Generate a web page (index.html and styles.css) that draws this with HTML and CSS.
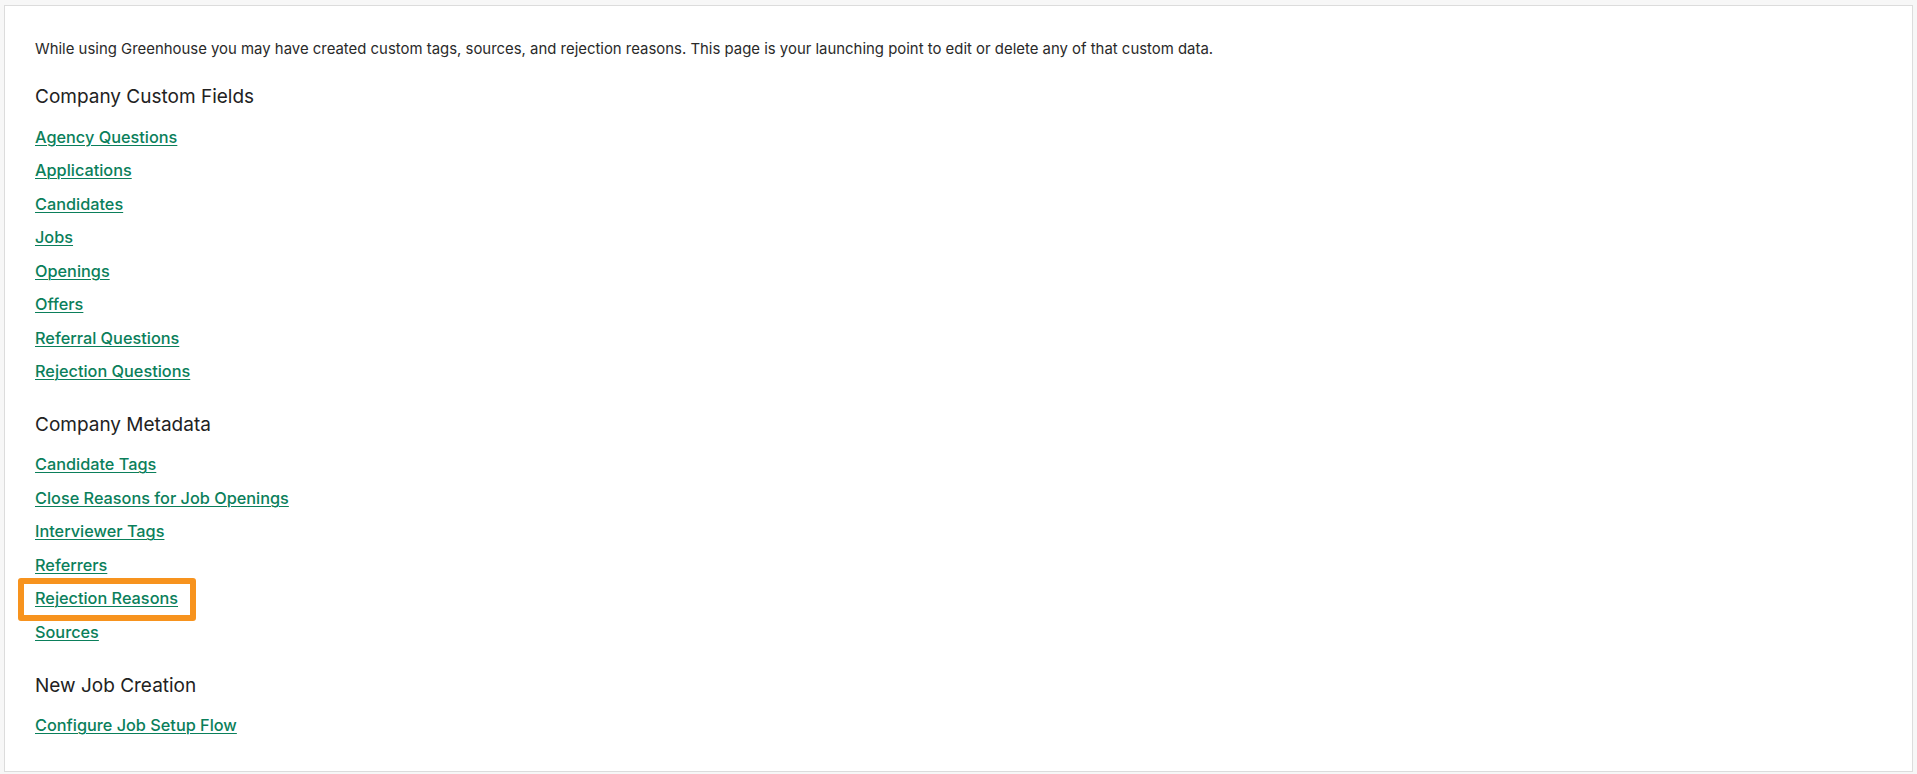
FILE: index.html
```html
<!DOCTYPE html>
<html lang="en">
<head>
<meta charset="utf-8">
<title>Custom Options</title>
<link rel="stylesheet" href="styles.css">
</head>
<body>
<div class="card">
  <p class="intro">While using Greenhouse you may have created custom tags, sources, and rejection reasons. This page is your launching point to edit or delete any of that custom data.</p>

  <section class="section">
    <h2 class="section-title">Company Custom Fields</h2>
    <ul class="link-list">
      <li><a href="#" class="link">Agency Questions</a></li>
      <li><a href="#" class="link">Applications</a></li>
      <li><a href="#" class="link">Candidates</a></li>
      <li><a href="#" class="link">Jobs</a></li>
      <li><a href="#" class="link">Openings</a></li>
      <li><a href="#" class="link">Offers</a></li>
      <li><a href="#" class="link">Referral Questions</a></li>
      <li><a href="#" class="link">Rejection Questions</a></li>
    </ul>
  </section>

  <section class="section">
    <h2 class="section-title">Company Metadata</h2>
    <ul class="link-list">
      <li><a href="#" class="link">Candidate Tags</a></li>
      <li><a href="#" class="link">Close Reasons for Job Openings</a></li>
      <li><a href="#" class="link">Interviewer Tags</a></li>
      <li><a href="#" class="link">Referrers</a></li>
      <li><a href="#" class="link link-highlighted">Rejection Reasons<span class="highlight-box"></span></a></li>
      <li><a href="#" class="link">Sources</a></li>
    </ul>
  </section>

  <section class="section">
    <h2 class="section-title">New Job Creation</h2>
    <ul class="link-list">
      <li><a href="#" class="link">Configure Job Setup Flow</a></li>
    </ul>
  </section>
</div>
</body>
</html>
```

FILE: styles.css
```css
html, body {
  margin: 0;
  padding: 0;
  background: #f7f7f7;
}

body {
  padding: 5px 4px 0 4px;
  font-family: Inter, "Liberation Sans", Arial, sans-serif;
  color: #222222;
}

.card {
  background: #ffffff;
  border: 1px solid #dcdcdc;
  padding: 32px 30px 29px 30px;
  box-sizing: border-box;
  height: 767px;
}

.intro {
  margin: 0;
  font-size: 14.92px;
  line-height: 22px;
  color: #2a2a2a;
}

.section {
  margin-top: 22.4px;
}

.section:first-of-type {
  margin-top: 23.4px;
}

.section-title {
  margin: 0 0 9.3px 0;
  font-size: 19px;
  line-height: 28px;
  font-weight: 400;
  color: #222222;
}

.link-list {
  list-style: none;
  margin: 0;
  padding: 0;
}

.link-list li {
  line-height: 33.5px;
  height: 33.5px;
}

.link {
  position: relative;
  display: inline-block;
  font-size: 16.3px;
  font-weight: 500;
  color: #0b7f5b;
  text-decoration: underline;
  text-decoration-thickness: 1px;
  text-underline-offset: 2px;
}

.highlight-box {
  position: absolute;
  left: -17px;
  right: -18px;
  top: -4px;
  bottom: -5px;
  border: 6px solid #f7931e;
  border-radius: 3px;
  pointer-events: none;
}
```
